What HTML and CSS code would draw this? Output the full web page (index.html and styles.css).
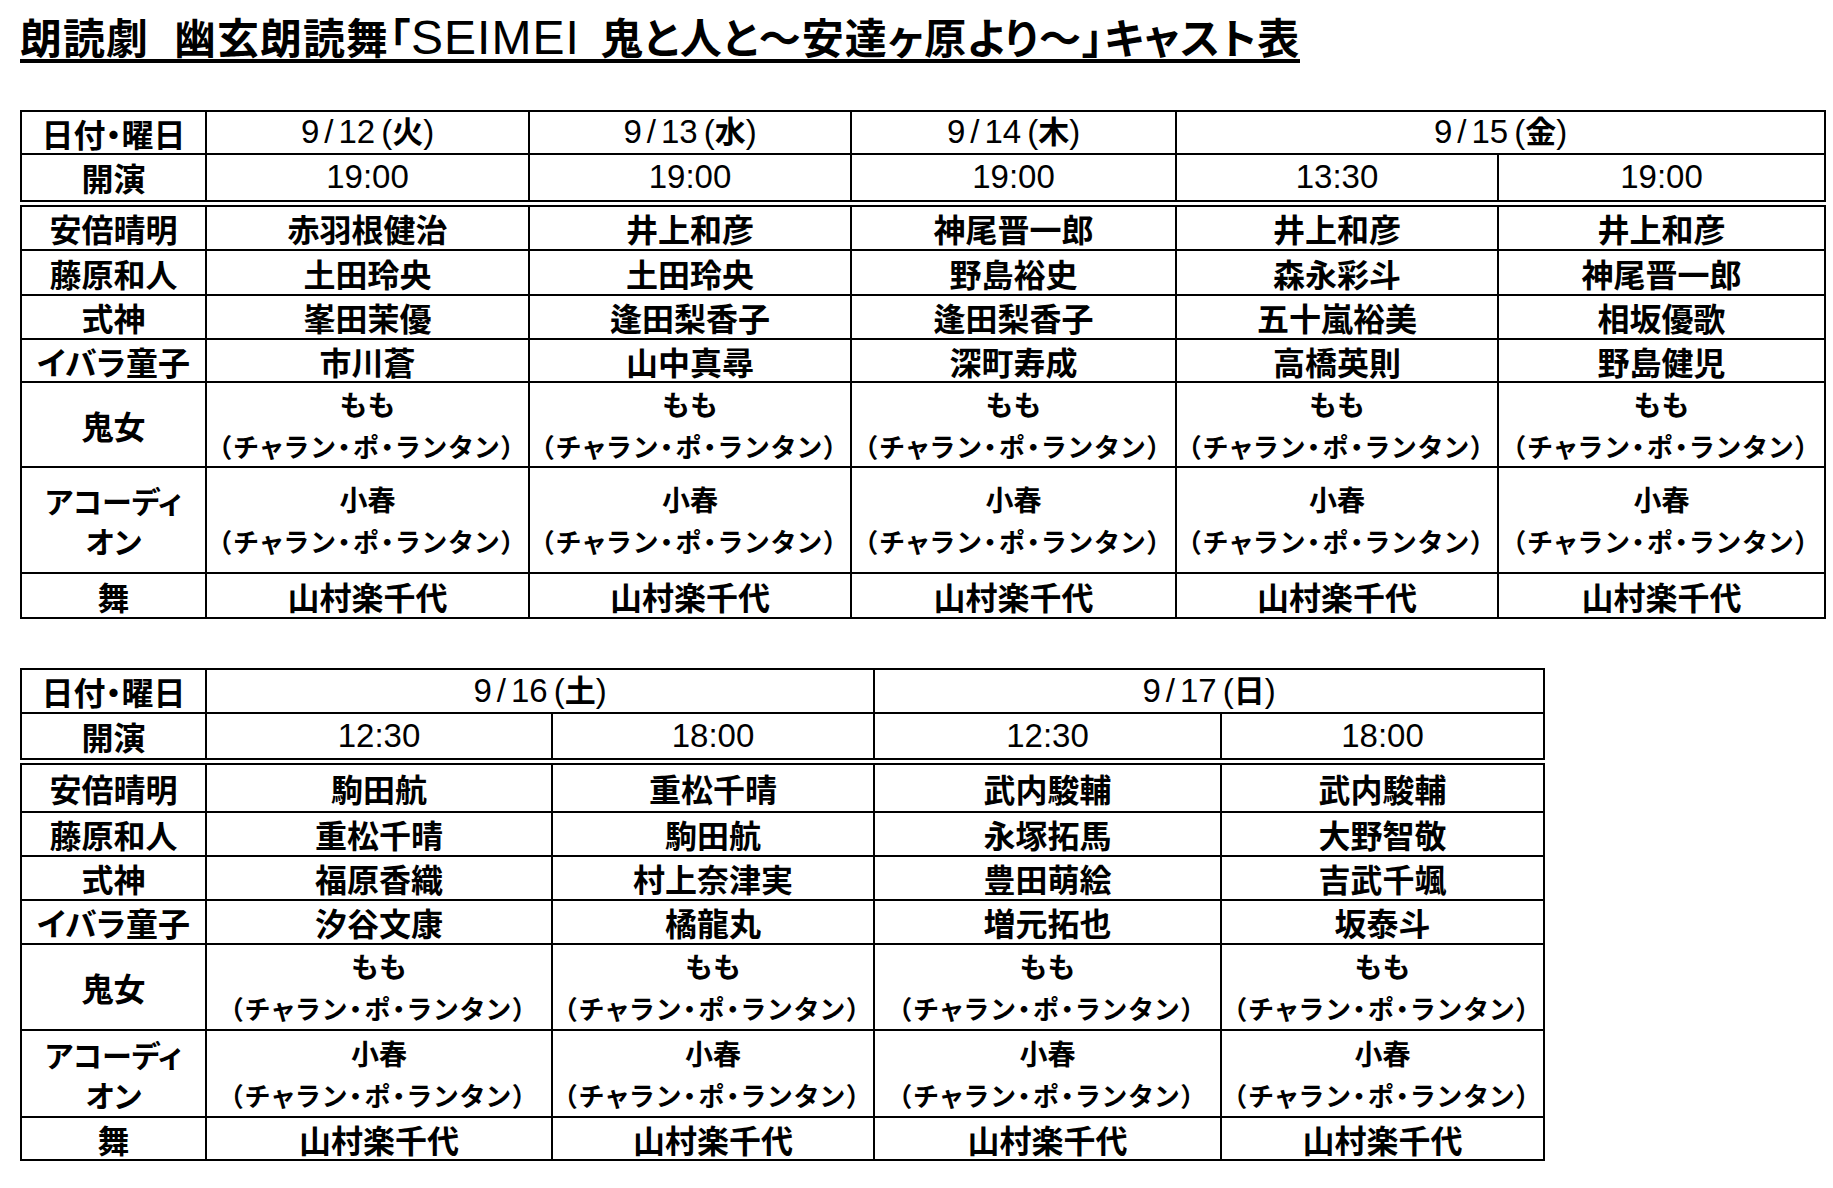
FILE: index.html
```html
<!DOCTYPE html>
<html lang="ja">
<head>
<meta charset="utf-8">
<title>朗読劇 幽玄朗読舞「SEIMEI 鬼と人と～安達ヶ原より～」キャスト表</title>
<link rel="stylesheet" href="styles.css">
</head>
<body>
<div class="page">
  <h1 class="title">朗読劇<span class="sp1">　</span>幽玄朗読舞「<span class="lat">SEIMEI</span><span class="sp2">　</span>鬼と人と～安達ヶ原より～」キャスト表</h1>

  <table class="cast t1">
    <colgroup>
      <col class="c-lbl"><col class="c-a"><col class="c-b"><col class="c-c"><col class="c-d"><col class="c-e">
    </colgroup>
    <tr class="r-date">
      <td class="lbl">日付・曜日</td>
      <td class="dt">9<span class="sl">/</span>12<span class="wd">(<span class="k">火</span>)</span></td>
      <td class="dt">9<span class="sl">/</span>13<span class="wd">(<span class="k">水</span>)</span></td>
      <td class="dt">9<span class="sl">/</span>14<span class="wd">(<span class="k">木</span>)</span></td>
      <td class="dt" colspan="2">9<span class="sl">/</span>15<span class="wd">(<span class="k">金</span>)</span></td>
    </tr>
    <tr class="r-time">
      <td class="lbl">開演</td>
      <td class="dt">19:00</td><td class="dt">19:00</td><td class="dt">19:00</td><td class="dt">13:30</td><td class="dt">19:00</td>
    </tr>
    <tr class="r-1">
      <td class="lbl">安倍晴明</td>
      <td class="nm">赤羽根健治</td><td class="nm">井上和彦</td><td class="nm">神尾晋一郎</td><td class="nm">井上和彦</td><td class="nm">井上和彦</td>
    </tr>
    <tr class="r-2">
      <td class="lbl">藤原和人</td>
      <td class="nm">土田玲央</td><td class="nm">土田玲央</td><td class="nm">野島裕史</td><td class="nm">森永彩斗</td><td class="nm">神尾晋一郎</td>
    </tr>
    <tr class="r-3">
      <td class="lbl">式神</td>
      <td class="nm">峯田茉優</td><td class="nm">逢田梨香子</td><td class="nm">逢田梨香子</td><td class="nm">五十嵐裕美</td><td class="nm">相坂優歌</td>
    </tr>
    <tr class="r-4">
      <td class="lbl">イバラ童子</td>
      <td class="nm">市川蒼</td><td class="nm">山中真尋</td><td class="nm">深町寿成</td><td class="nm">高橋英則</td><td class="nm">野島健児</td>
    </tr>
    <tr class="r-oni1">
      <td class="lbl">鬼女</td>
      <td class="two"><div class="n1">もも</div><div class="n2">（チャラン・ポ・ランタン）</div></td>
      <td class="two"><div class="n1">もも</div><div class="n2">（チャラン・ポ・ランタン）</div></td>
      <td class="two"><div class="n1">もも</div><div class="n2">（チャラン・ポ・ランタン）</div></td>
      <td class="two"><div class="n1">もも</div><div class="n2">（チャラン・ポ・ランタン）</div></td>
      <td class="two"><div class="n1">もも</div><div class="n2">（チャラン・ポ・ランタン）</div></td>
    </tr>
    <tr class="r-acc1">
      <td class="lbl lbl2"><div>アコーディ</div><div>オン</div></td>
      <td class="two"><div class="n1">小春</div><div class="n2">（チャラン・ポ・ランタン）</div></td>
      <td class="two"><div class="n1">小春</div><div class="n2">（チャラン・ポ・ランタン）</div></td>
      <td class="two"><div class="n1">小春</div><div class="n2">（チャラン・ポ・ランタン）</div></td>
      <td class="two"><div class="n1">小春</div><div class="n2">（チャラン・ポ・ランタン）</div></td>
      <td class="two"><div class="n1">小春</div><div class="n2">（チャラン・ポ・ランタン）</div></td>
    </tr>
    <tr class="r-mai">
      <td class="lbl">舞</td>
      <td class="nm">山村楽千代</td><td class="nm">山村楽千代</td><td class="nm">山村楽千代</td><td class="nm">山村楽千代</td><td class="nm">山村楽千代</td>
    </tr>
  </table>

  <table class="cast t2">
    <colgroup>
      <col class="c-lbl"><col class="c-w"><col class="c-n"><col class="c-w2"><col class="c-n2">
    </colgroup>
    <tr class="r-date">
      <td class="lbl">日付・曜日</td>
      <td class="dt" colspan="2">9<span class="sl">/</span>16<span class="wd">(<span class="k">土</span>)</span></td>
      <td class="dt" colspan="2">9<span class="sl">/</span>17<span class="wd">(<span class="k">日</span>)</span></td>
    </tr>
    <tr class="r-time">
      <td class="lbl">開演</td>
      <td class="dt">12:30</td><td class="dt">18:00</td><td class="dt">12:30</td><td class="dt">18:00</td>
    </tr>
    <tr class="r-1">
      <td class="lbl">安倍晴明</td>
      <td class="nm">駒田航</td><td class="nm">重松千晴</td><td class="nm">武内駿輔</td><td class="nm">武内駿輔</td>
    </tr>
    <tr class="r-2">
      <td class="lbl">藤原和人</td>
      <td class="nm">重松千晴</td><td class="nm">駒田航</td><td class="nm">永塚拓馬</td><td class="nm">大野智敬</td>
    </tr>
    <tr class="r-3">
      <td class="lbl">式神</td>
      <td class="nm">福原香織</td><td class="nm">村上奈津実</td><td class="nm">豊田萌絵</td><td class="nm">吉武千颯</td>
    </tr>
    <tr class="r-4">
      <td class="lbl">イバラ童子</td>
      <td class="nm">汐谷文康</td><td class="nm">橘龍丸</td><td class="nm">増元拓也</td><td class="nm">坂泰斗</td>
    </tr>
    <tr class="r-oni2">
      <td class="lbl">鬼女</td>
      <td class="two"><div class="n1">もも</div><div class="n2">（チャラン・ポ・ランタン）</div></td>
      <td class="two"><div class="n1">もも</div><div class="n2">（チャラン・ポ・ランタン）</div></td>
      <td class="two"><div class="n1">もも</div><div class="n2">（チャラン・ポ・ランタン）</div></td>
      <td class="two"><div class="n1">もも</div><div class="n2">（チャラン・ポ・ランタン）</div></td>
    </tr>
    <tr class="r-acc2">
      <td class="lbl lbl2"><div>アコーディ</div><div>オン</div></td>
      <td class="two"><div class="n1">小春</div><div class="n2">（チャラン・ポ・ランタン）</div></td>
      <td class="two"><div class="n1">小春</div><div class="n2">（チャラン・ポ・ランタン）</div></td>
      <td class="two"><div class="n1">小春</div><div class="n2">（チャラン・ポ・ランタン）</div></td>
      <td class="two"><div class="n1">小春</div><div class="n2">（チャラン・ポ・ランタン）</div></td>
    </tr>
    <tr class="r-mai2">
      <td class="lbl">舞</td>
      <td class="nm">山村楽千代</td><td class="nm">山村楽千代</td><td class="nm">山村楽千代</td><td class="nm">山村楽千代</td>
    </tr>
  </table>
</div>
</body>
</html>
```

FILE: styles.css
```css
html, body {
  margin: 0;
  padding: 0;
  background: #fff;
  color: #000;
}

.page {
  padding: 13px 0 0 20px;
  font-family: "Noto Sans CJK JP", "Noto Sans", sans-serif;
}

.title {
  margin: 0;
  width: max-content;
  font-size: 42px;
  line-height: 46px;
  font-weight: 700;
  letter-spacing: 1px;
  font-feature-settings: "palt" 1;
  border-bottom: 4px solid #000;
  white-space: nowrap;
}

.title .sp1 {
  font-size: 24px;
  line-height: 0;
}

.title .lat {
  font-family: "Liberation Sans", Arial, sans-serif;
  font-weight: 400;
  font-size: 48px;
  line-height: 0;
}

.title .sp2 {
  font-size: 20px;
  line-height: 0;
}

.cast {
  border-collapse: collapse;
  table-layout: fixed;
  font-family: "Noto Sans CJK JP", sans-serif;
}

.t1 {
  width: 1804px;
  margin-top: 47px;
}

.t2 {
  width: 1523px;
  margin-top: 49px;
}

.c-lbl { width: 185px; }
.t1 .c-a { width: 323px; }
.t1 .c-b { width: 322px; }
.t1 .c-c { width: 325px; }
.t1 .c-d { width: 322px; }
.t1 .c-e { width: 327px; }
.t2 .c-w { width: 346px; }
.t2 .c-n { width: 322px; }
.t2 .c-w2 { width: 347px; }
.t2 .c-n2 { width: 323px; }

.cast td {
  border: 2px solid #000;
  padding: 0;
  text-align: center;
  vertical-align: middle;
  white-space: nowrap;
}

.r-time td {
  border-bottom: 7px double #000;
}

.r-date .dt {
  padding-bottom: 3px;
}

.t1 .r-date { height: 43px; }
.t1 .r-time { height: 49px; }
.t1 .r-1 { height: 47px; }
.t1 .r-2 { height: 45px; }
.t1 .r-3 { height: 44px; }
.t1 .r-4 { height: 43px; }
.r-oni1 { height: 85px; }
.r-acc1 { height: 106px; }
.r-mai { height: 45px; }

.t2 .r-date { height: 44px; }
.t2 .r-time { height: 48px; }
.t2 .r-1 { height: 51px; }
.t2 .r-2 { height: 44px; }
.t2 .r-3 { height: 44px; }
.t2 .r-4 { height: 44px; }
.r-oni2 { height: 86px; }
.r-acc2 { height: 87px; }
.r-mai2 { height: 43px; }

.lbl {
  font-size: 32px;
  font-weight: 700;
  line-height: 36px;
  font-feature-settings: "palt" 1;
}

.lbl2 {
  font-size: 30px;
  line-height: 40px;
}

.dt {
  font-family: "Liberation Sans", Arial, sans-serif;
  font-size: 33px;
  font-weight: 400;
  line-height: 36px;
}

.dt .sl {
  margin: 0 5px;
}

.dt .wd {
  margin-left: 6px;
}

.dt .k {
  font-family: "Noto Sans CJK JP", sans-serif;
  font-weight: 700;
  font-size: 31px;
}

.nm {
  font-size: 32px;
  font-weight: 700;
  line-height: 36px;
}

.two {
  font-weight: 700;
  line-height: 41px;
}

.two .n1 {
  font-size: 28px;
}

.two .n2 {
  font-size: 26px;
  font-feature-settings: "palt" 1;
  letter-spacing: 2.5px;
}
```
